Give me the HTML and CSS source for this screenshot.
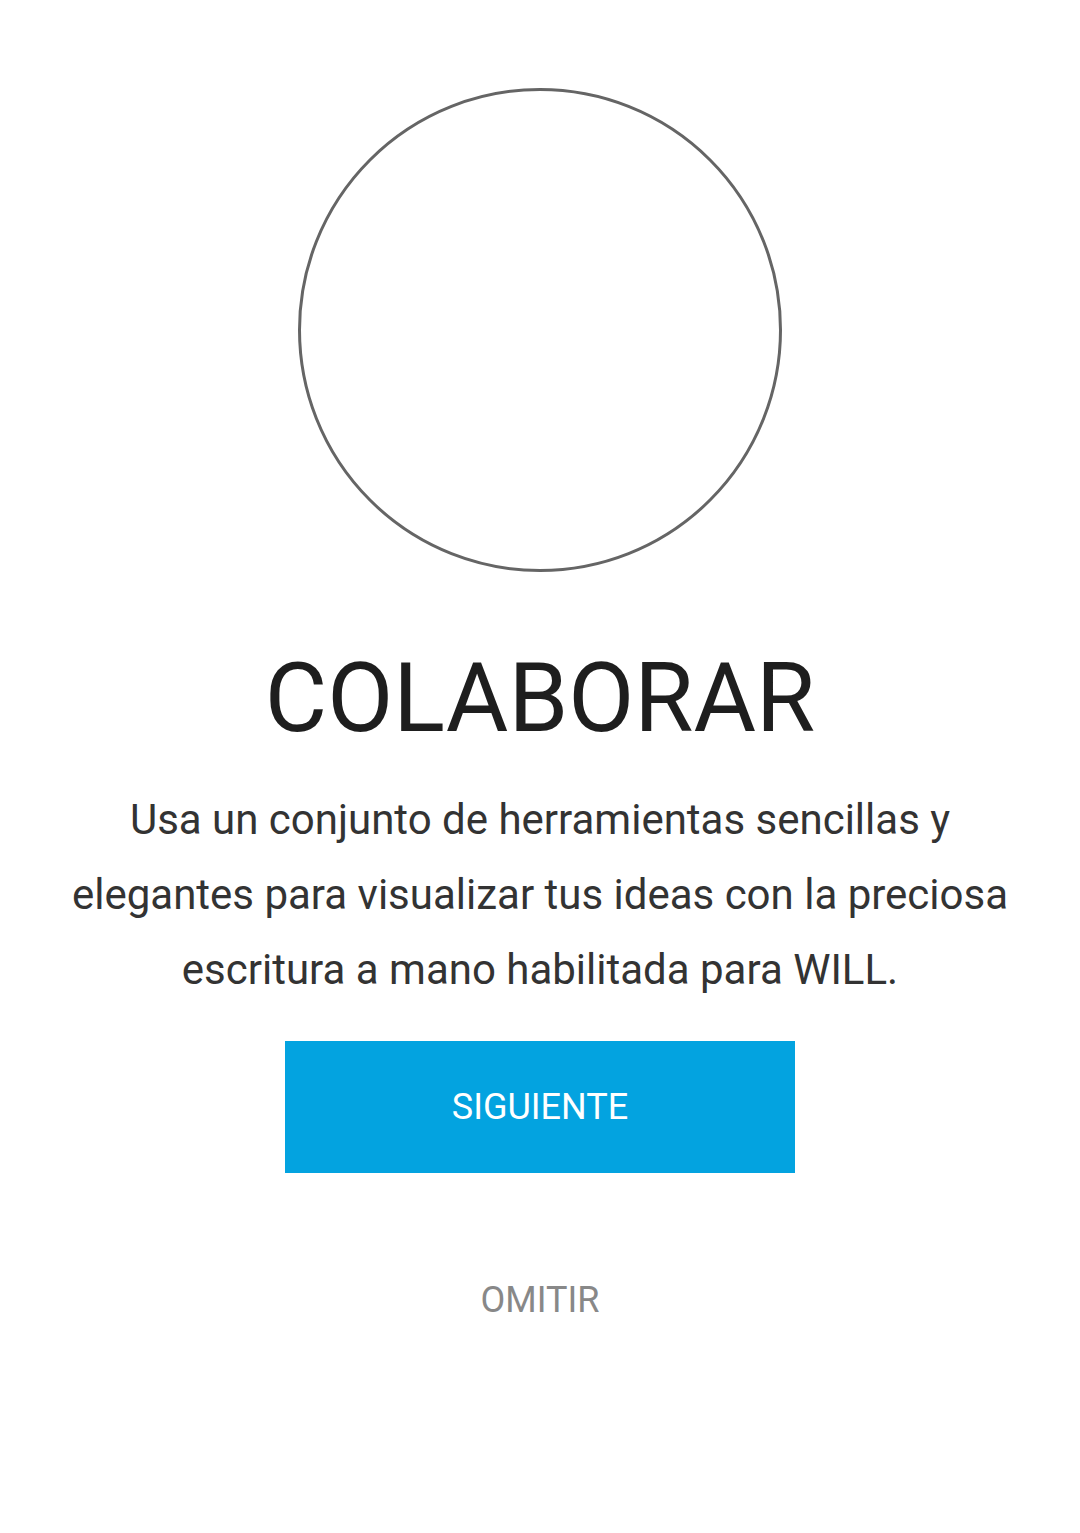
FILE: index.html
```html
<!DOCTYPE html>
<html lang="es">
<head>
<meta charset="utf-8">
<title>Colaborar</title>
<link rel="stylesheet" href="styles.css">
</head>
<body>
<main class="screen">
  <div class="illustration"></div>
  <h1 class="title">COLABORAR</h1>
  <p class="description">Usa un conjunto de herramientas sencillas y elegantes para visualizar tus ideas con la preciosa escritura a mano habilitada para WILL.</p>
  <button class="btn-next">SIGUIENTE</button>
  <button class="btn-skip">OMITIR</button>
</main>
</body>
</html>
```

FILE: styles.css
```css
html, body {
  margin: 0;
  padding: 0;
  background: #ffffff;
}
.screen {
  width: 1080px;
  height: 1533px;
  display: flex;
  flex-direction: column;
  align-items: center;
  font-family: Roboto, "Noto Sans", sans-serif;
  box-sizing: border-box;
  padding-top: 88px;
}
.illustration {
  width: 478px;
  height: 478px;
  border: 3px solid #656565;
  border-radius: 50%;
  flex: none;
}
.title {
  margin: 66px 0 0;
  font-size: 96px;
  font-weight: 400;
  line-height: 120px;
  color: #1e1e1e;
  letter-spacing: 0;
}
.description {
  margin: 24px 0 0;
  width: 960px;
  font-size: 42px;
  line-height: 75px;
  color: #333333;
  text-align: center;
}
.btn-next {
  margin-top: 34px;
  width: 510px;
  height: 132px;
  border: none;
  background: #03a3e0;
  color: #ffffff;
  font-family: Roboto, "Noto Sans", sans-serif;
  font-size: 36px;
  padding: 0;
}
.btn-skip {
  margin-top: 106px;
  border: none;
  background: none;
  color: #888888;
  font-family: Roboto, "Noto Sans", sans-serif;
  font-size: 36px;
  padding: 0;
}
```
